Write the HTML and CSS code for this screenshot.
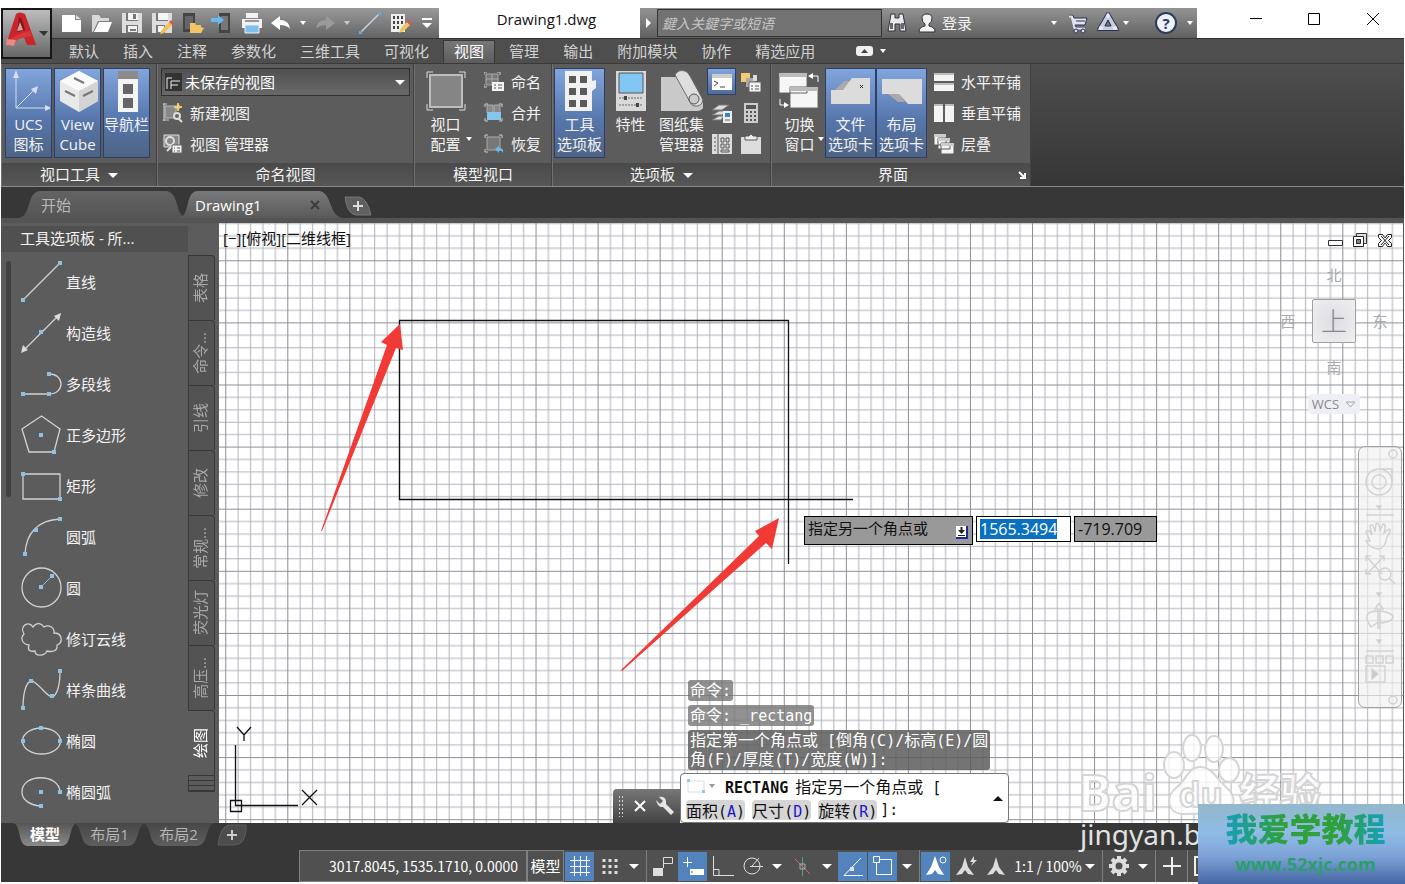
FILE: index.html
```
<!DOCTYPE html>
<html lang="zh-CN">
<head>
  <meta charset="UTF-8">
  <title>Drawing1.dwg</title>
  <link rel="stylesheet" href="styles.css">
</head>
<body>
  <header class="titlebar">
    <button class="app-button" aria-label="应用程序菜单">
      <svg width="46" height="46" viewBox="0 0 46 46">
        <path d="M3 34 L13 3 Q16 0 22 3 L33 34 L24 34 L21 26 L14 26 L11 35 Z" fill="#c9252b"/>
        <path d="M16 6 L19 8 L22 19 L14 21 Z" fill="#8b1218"/>
        <path d="M17 11 L20 19 L14 20 Z" fill="#c9a6a6"/>
        <path d="M4 31 Q14 22 27 20 L29 25 Q15 26 8 34 Z" fill="#d8363b"/>
        <path d="M4 28 L3 34 L11 35 L13 29 Z" fill="#e88a87"/>
        <path d="M36 20 h9 l-4 5 z" fill="#333"/>
      </svg>
    </button>
    <div class="quick-access">
      <button aria-label="新建"><svg width="24" height="24"><path d="M2 4h13v5h6v12H2z" fill="#fff"/><path d="M16 4l5 4h-5z" fill="#ddd"/></svg></button>
      <button aria-label="打开"><svg width="24" height="24"><path d="M2 4h7l2 3h8v3H8L3 21H2z" fill="#d8d8d8"/><path d="M9 11h13l-4 10H4z" fill="#fff"/></svg></button>
      <button aria-label="保存"><svg width="24" height="24"><path d="M2 2h20v20H2z" fill="#ddd"/><path d="M6 2h12v8H6zM6 14h12v8H6z" fill="#777"/><path d="M8 2h10v7H8zM8 15h9v6H8z" fill="#f4f4f4"/><path d="M13 3h3v5h-3zM10 18h6v2h-6z" fill="#777"/></svg></button>
      <button aria-label="另存为"><svg width="24" height="24"><path d="M2 2h20v20H2z" fill="#ddd"/><path d="M6 2h12v8H6zM6 14h9v8H6z" fill="#777"/><path d="M8 2h10v7H8zM8 15h6v6H8z" fill="#f4f4f4"/><path d="M11 20l8-9 3 3-8 8-4 1z" fill="#f0c25b"/><path d="M19 11l2-2 3 3-2 2z" fill="#e0524b"/></svg></button>
      <button aria-label="从移动设备打开"><svg width="24" height="24"><path d="M3 2h12v19H3z" fill="#444"/><path d="M5 5h8v13H5z" fill="#666"/><path d="M10 12h5l1 2h5v2l3 1-3 5H10z" fill="#f2c566"/></svg></button>
      <button aria-label="保存到移动设备"><svg width="24" height="24"><path d="M9 2h11v20H9z" fill="#444"/><path d="M11 5h7v14h-7z" fill="#777"/><path d="M1 7h7V4l6 5-6 5v-3H1z" fill="#68b9ee"/></svg></button>
      <button aria-label="打印"><svg width="24" height="24"><path d="M6 2h12v5H6zM2 8h20v9H2z" fill="#f2f2f2"/><path d="M5 9h14v2H5z" fill="#999"/><path d="M5 14h14v8H5z" fill="#7cc0ee" stroke="#eee"/></svg></button>
      <button class="wide" aria-label="放弃"><svg width="24" height="24"><path d="M2 12l9-7v4q9 0 10 9-3-4-10-4v5z" fill="#fff"/></svg></button>
      <i class="caret small"></i>
      <button class="wide" aria-label="重做"><svg width="24" height="24"><path d="M22 12l-9-7v4q-9 0-10 9 3-4 10-4v5z" fill="#9a9a9a"/></svg></button>
      <i class="caret small dim"></i>
      <button aria-label="直线"><svg width="24" height="24"><path d="M3 21L21 3" stroke="#c8d6e0" stroke-width="1.5"/><path d="M1 20h3v3H1zM20 1h3v3h-3z" fill="#68a8dc"/></svg></button>
      <button aria-label="工具选项板"><svg width="24" height="24"><path d="M3 3h14v18H3z" fill="#eee"/><path d="M5 5h2v3H5zM9 5h2v3H9zM13 5h2v3h-2zM5 10h2v3H5zM9 10h2v3H9zM13 10h2v3h-2zM5 15h2v3H5zM9 15h2v3H9z" fill="#444"/><path d="M11 22l2-5 6-6 3 3-6 6z" fill="#f0c25b"/><path d="M19 11l2-2 3 3-2 2z" fill="#e0524b"/></svg></button>
      <button aria-label="自定义"><svg width="12" height="14"><path d="M1 2h10v2H1zM1 7h10l-5 5z" fill="#fff"/></svg></button>
    </div>
    <h1 class="file-title">Drawing1.dwg</h1>
    <div class="info-center">
      <i class="play"></i>
      <input type="text" class="search" placeholder="鍵入关鍵字或短语" aria-label="搜索">
      <button aria-label="搜索"><svg width="20" height="22"><path d="M4 2h4v4h4V2h4l3 17h-6v-7H8v7H1z" fill="#e8e8ee" stroke="#333"/><path d="M3 11h3v6H3zM14 11h3v6h-3z" fill="#667"/></svg></button>
      <button aria-label="用户"><svg width="20" height="22"><path d="M2 20q0-5 6-6v-2q-3-2-3-6 0-4 5-4t5 4q0 4-3 6v2q6 1 6 6z" fill="#f1f1f4" stroke="#333"/></svg></button>
      <a href="#" class="login">登录</a>
      <i class="caret small"></i>
      <button class="cart" aria-label="购物车"><svg width="20" height="22"><path d="M5 6h14l-2 7H7z" fill="#dfe3f0"/><path d="M1 4h3l3 12h10" fill="none" stroke="#dfe3f0" stroke-width="3"/><path d="M1 3h4l1 3h13l-2 7H7l1 2h9M8 9h9" fill="none" stroke="#283252"/><circle cx="8" cy="19" r="2" fill="#dde" stroke="#283252"/><circle cx="15" cy="19" r="2" fill="#dde" stroke="#283252"/></svg></button>
      <button class="share" aria-label="应用"><svg width="22" height="22"><path d="M11 4L4 16h14z" fill="none" stroke="#283252" stroke-width="6"/><path d="M11 4L4 16h14z" fill="none" stroke="#c8cee2" stroke-width="4"/><path d="M11 8l-3 6h6z" fill="#777" stroke="#283252"/><g fill="#e8ebf5"><circle cx="11" cy="4" r="2"/><circle cx="4" cy="16" r="2"/><circle cx="18" cy="16" r="2"/></g></svg></button>
      <i class="caret small"></i>
      <button class="help" aria-label="帮助"><b>?</b></button>
      <i class="caret small"></i>
    </div>
    <div class="window-buttons">
      <button aria-label="最小化"><svg width="14" height="14"><path d="M1 6.500h12" stroke="#000"/></svg></button>
      <button aria-label="最大化"><svg width="14" height="14"><path d="M1.500 1.500h11v11h-11z" fill="none" stroke="#000"/></svg></button>
      <button aria-label="关闭"><svg width="14" height="14"><path d="M1 1l12 12M13 1L1 13" stroke="#000"/></svg></button>
    </div>
  </header>

  <nav class="menu">
    <a href="#">默认</a>
    <a href="#">插入</a>
    <a href="#">注释</a>
    <a href="#">参数化</a>
    <a href="#">三维工具</a>
    <a href="#">可视化</a>
    <a href="#" class="active">视图</a>
    <a href="#">管理</a>
    <a href="#">输出</a>
    <a href="#">附加模块</a>
    <a href="#">协作</a>
    <a href="#">精选应用</a>
    <button class="collapse" aria-label="最小化功能区"><svg width="17" height="10"><rect width="17" height="10" rx="3" fill="#f0f0f0"/><path d="M5 7h7L8.500 3z" fill="#444"/></svg></button>
    <i class="caret small"></i>
  </nav>

  <section class="ribbon">
    <div class="panel panel-tools">
      <div class="panel-body">
        <button class="big on">
          <svg width="44" height="44"><path d="M8 39V5M8 39h32M8 39l20-20" stroke="#d5deed" fill="none"/><path d="M8 1l3 8H5zM44 39l-7 3v-6zM30 17l-2 8-5-5z" fill="#d5deed"/></svg>
          <span>UCS<br>图标</span>
        </button>
        <button class="big on">
          <svg width="44" height="44"><path d="M22 2l19 10v20L22 43 3 32V12z" fill="#e9e9e9"/><path d="M22 2l19 10-19 10L3 12z" fill="#fafafa"/><path d="M22 22l19-10v20L22 43z" fill="#d4d4d4"/><path d="M17 9l10 5M8 22l10 5M26 27l10-5" stroke="#777" stroke-width="2"/></svg>
          <span>View<br>Cube</span>
        </button>
        <button class="big on">
          <svg width="44" height="44"><path d="M12 2h20v8H12z" fill="#8b8b8b"/><path d="M12 10h20v33H12z" fill="#f4f4f4"/><path d="M17 15h10v10H17zM17 29h10v10H17z" fill="#666"/></svg>
          <span>导航栏</span>
        </button>
      </div>
      <h2>视口工具 <i class="caret"></i></h2>
    </div>

    <div class="panel panel-views">
      <div class="panel-body rows">
        <div class="view-select">
          <svg width="17" height="18"><path d="M0 0h17v18H0z" fill="#333"/><path d="M2 16V5h5M6 16V8h9M6 12h7" fill="none" stroke="#eee"/></svg>
          <select aria-label="视图">
            <option>未保存的视图</option>
          </select>
          <i class="caret"></i>
        </div>
        <button class="row"><svg width="20" height="20"><path d="M2 3h11v12H2z" fill="#888" stroke="#bbb"/><path d="M0 1h4M1 0v18M0 17h6" stroke="#ccc"/><circle cx="14" cy="13" r="3" fill="#666" stroke="#ddd" stroke-width="2"/><path d="M16 16l3 3" stroke="#ddd" stroke-width="2"/><path d="M15 0l1 3 3 1-3 1-1 3-1-3-3-1 3-1z" fill="#f5cf7a" stroke="#f5cf7a"/></svg>新建视图</button>
        <button class="row"><svg width="20" height="20"><path d="M1 1h15v12H1z" fill="#888" stroke="#ddd"/><circle cx="7" cy="7" r="4" fill="none" stroke="#ddd" stroke-width="2"/><path d="M4 17l6-6" stroke="#ddd" stroke-width="2"/><path d="M9 11h10v8H9z" fill="#f4f4f4" stroke="#666"/><path d="M11 14h1M14 14h3M11 17h1M14 17h3" stroke="#555"/></svg>视图 管理器</button>
      </div>
      <h2>命名视图</h2>
    </div>

    <div class="panel panel-viewports">
      <div class="panel-body">
        <button class="big menu-btn">
          <svg width="44" height="44"><path d="M6 6h32v32H6z" fill="#858585" stroke="#bdbdbd" stroke-width="2"/><path d="M3 9V3h6M35 3h6v6M41 35v6h-6M9 41H3v-6" fill="none" stroke="#ddd"/></svg>
          <span>视口<br>配置</span>
          <i class="caret small"></i>
        </button>
        <div class="rows">
          <button class="row"><svg width="20" height="20"><path d="M2 2h12v11H2zM8 2v11M2 7h12" fill="#777" stroke="#aaa"/><path d="M0 3V0h3M13 0h3v3M0 12v3h3" fill="none" stroke="#ccc"/><path d="M8 10h12v9H8z" fill="#f4f4f4"/><path d="M10 13h2M14 13h4M10 16h2M14 16h4" stroke="#555"/></svg>命名</button>
          <button class="row"><svg width="20" height="20"><path d="M3 2h6v8H3zM10 2h6v8h-6z" fill="#888" stroke="#aaa"/><path d="M3 9h14v8H3z" fill="#86c5ee"/><path d="M1 4V1h3M15 1h3v3M18 15v3h-3M4 18H1v-3" fill="none" stroke="#ccc"/></svg>合并</button>
          <button class="row"><svg width="20" height="20"><path d="M3 3h13v13H3z" fill="#777" stroke="#aaa"/><path d="M1 4V1h3M15 1h3v3M4 18H1v-3" fill="none" stroke="#ccc"/><path d="M11 15l4-3v2q5 0 4 5-1-3-4-2v2z" fill="#6fb9ea"/></svg>恢复</button>
        </div>
      </div>
      <h2>模型视口</h2>
    </div>

    <div class="panel panel-palettes">
      <div class="panel-body">
        <button class="big on">
          <svg width="44" height="44"><path d="M7 2h27v10l4-1v8l-4 3v20H7z" fill="#f1f1f1"/><path d="M11 7h7v7h-7zM22 7h7v7h-7zM11 19h7v7h-7zM22 19h7v7h-7zM11 31h7v7h-7zM22 31h7v7h-7z" fill="#5a5a5a"/></svg>
          <span>工具<br>选项板</span>
        </button>
        <button class="big">
          <svg width="44" height="44"><path d="M7 2h30v40H7z" fill="#d9d9d9"/><path d="M10 4h24v20H10z" fill="#82c7f4" stroke="#555"/><path d="M10 29h24M10 36h24" stroke="#666" stroke-dasharray="2 1"/><path d="M15 27h3v4h-3zM27 34h3v4h-3z" fill="#444"/></svg>
          <span>特性</span>
        </button>
        <button class="big">
          <svg width="44" height="44"><path d="M1 8h16l14 22h12v9q-2 3-6 3H1z" fill="#c9c9c9"/><path d="M15 6q3-6 10-4 3 1 5 5l12 22q2 6-4 8-6 1-8-4z" fill="#dedede" stroke="#6a6a6a"/><circle cx="34" cy="30" r="5" fill="#ccc" stroke="#555"/></svg>
          <span>图纸集<br>管理器</span>
        </button>
        <div class="icon-grid">
          <button class="on" aria-label="命令行"><svg width="20" height="18"><path d="M0 1h20v16H0z" fill="#fff"/><path d="M0 1h20v4H0z" fill="#ccc"/><path d="M2 8l4 2-4 3M8 14h5" fill="none" stroke="#444"/></svg></button>
          <button aria-label="标记集"><svg width="20" height="20"><path d="M0 1h9v9H0z" fill="#f4cb74"/><path d="M5 6h9v9H5z" fill="#aaa"/><path d="M12 3h4v6h-4z" fill="#ddd"/><path d="M8 10h12v10H8z" fill="#f4f4f4" stroke="#666"/><path d="M10 14h2M14 14h4M10 17h2M14 17h4" stroke="#555"/></svg></button>
          <button aria-label="图层特性"><svg width="20" height="20"><path d="M0 7l7-5h10l-7 5zM0 12l7-4h10l-7 4zM0 17l7-4h5l-3 4z" fill="#ddd" stroke="#777"/><path d="M11 8h9v12h-9z" fill="#eee"/><path d="M13 10h5v4h-5z" fill="#3487c5"/><path d="M13 17h5" stroke="#666"/></svg></button>
          <button aria-label="快速计算器"><svg width="16" height="20"><path d="M1 0h14v20H1z" fill="#ccc"/><path d="M3 2h10v4H3zM3 8h2v2H3zM7 8h2v2H7zM11 8h2v2h-2zM3 12h2v2H3zM7 12h2v2H7zM11 12h2v2h-2zM3 16h2v2H3zM7 16h2v2H7zM11 16h2v2h-2z" fill="#555"/></svg></button>
          <button aria-label="设计中心"><svg width="20" height="20"><path d="M0 0h20v20H0z" fill="#ddd"/><path d="M6 0v20" stroke="#555"/><path d="M2 4h2M2 8h2M2 12h2M2 16h2" stroke="#555"/><path d="M9 4h3v4H9zM14 4h3v4h-3zM9 10h3v4H9zM14 10h3v4h-3zM9 16h8v2H9z" fill="none" stroke="#555"/></svg></button>
          <button aria-label="剪贴板"><svg width="22" height="20"><path d="M1 3h20v17H1z" fill="#ddd"/><path d="M5 2h4q2-4 4 0h4v4H5z" fill="#eee" stroke="#555"/></svg></button>
        </div>
      </div>
      <h2>选项板 <i class="caret"></i></h2>
    </div>

    <div class="panel panel-ui">
      <div class="panel-body">
        <button class="big menu-btn">
          <svg width="44" height="44"><path d="M1 4h28v20H1zM12 18h28v21H12z" fill="#f6f6f6" stroke="#666"/><path d="M1 4h28v4H1zM12 18h28v4H12z" fill="#bbb"/><path d="M40 13V7h-8M2 30v6h7" fill="none" stroke="#fff"/><path d="M30 7l5-3v6zM11 36l-5-3v6z" fill="#fff"/></svg>
          <span>切换<br>窗口</span>
          <i class="caret small"></i>
        </button>
        <button class="big on">
          <svg width="44" height="44"><path d="M6 21l9-9h8l-9 9z" fill="#aaa"/><path d="M2 21h12l9-12h18v26H2z" fill="#dcdcdc"/><path d="M31 16l3 3M34 16l-3 3" stroke="#333"/></svg>
          <span>文件<br>选项卡</span>
        </button>
        <button class="big on">
          <svg width="44" height="44"><path d="M8 25l10 8h7l-6-8z" fill="#aaa"/><path d="M2 10h40v25H28l-9-10H2z" fill="#dcdcdc"/></svg>
          <span>布局<br>选项卡</span>
        </button>
        <div class="rows">
          <button class="row"><svg width="20" height="20"><path d="M0 1h20v8H0zM0 11h20v8H0z" fill="#f4f4f4"/><path d="M0 1h20v2H0zM0 11h20v2H0z" fill="#bbb"/></svg>水平平铺</button>
          <button class="row"><svg width="20" height="20"><path d="M0 1h9v18H0zM11 1h9v18h-9z" fill="#f4f4f4"/><path d="M0 1h9v2H0zM11 1h9v2h-9z" fill="#bbb"/></svg>垂直平铺</button>
          <button class="row"><svg width="20" height="20"><path d="M0 0h12v11H0zM4 4h12v11H4zM7 9h13v11H7z" fill="#f4f4f4" stroke="#5c5c5c"/><path d="M0 0h12v3H0zM4 4h12v3H4zM7 9h13v3H7z" fill="#ccc"/></svg>层叠</button>
        </div>
      </div>
      <h2>界面<svg class="launcher" width="8" height="8"><path d="M1 1l5 5M7 2v5H2" fill="none" stroke="#fff" stroke-width="2"/></svg></h2>
    </div>
  </section>

  <div class="doc-tabs">
    <a href="#" class="doc-tab">开始</a>
    <a href="#" class="doc-tab active">Drawing1<svg width="10" height="10"><path d="M1 1l8 8M9 1L1 9" stroke="#3c3c3c" stroke-width="2"/></svg></a>
    <button class="add" aria-label="新图形"><svg width="28" height="20"><path d="M1 1h14q8 1 12 18H12Q3 18 1 1z" fill="#606060" stroke="#777"/><path d="M14 5v10M9 10h10" stroke="#ddd" stroke-width="2"/></svg></button>
  </div>

  <main>
    <aside class="palette">
      <div class="palette-main">
        <h2>工具选项板 - 所...</h2>
        <div class="palette-scroll">
          <i class="scrollbar"></i>
          <ul class="tools">
            <li><svg width="44" height="44"><path class="ln" d="M3 40L40 3"/><path class="pt" d="M1 38h4v4H1zM38 1h4v4h-4z"/></svg>直线</li>
            <li><svg width="44" height="44"><path class="ln" d="M3 40L40 3"/><path d="M1 42l2-8 5 5zM41 2l-2 8-5-5z" fill="#ddd"/><path class="pt" d="M19 19h4v4h-4z"/></svg>构造线</li>
            <li><svg width="44" height="44"><path class="ln" d="M3 32h26c16 0 16-20 0-20"/><path class="pt" d="M1 30h4v4H1zM27 30h4v4h-4zM27 10h4v4h-4z"/></svg>多段线</li>
            <li><svg width="44" height="44"><path class="ln" d="M21.500 3L40 16l-6 23H9L2 16z"/><path class="pt" d="M19 20h4v4h-4zM32 37h4v4h-4z"/></svg>正多边形</li>
            <li><svg width="44" height="44"><path class="ln" d="M3 10h37v25H3z"/><path class="pt" d="M1 8h4v4H1zM38 33h4v4h-4z"/></svg>矩形</li>
            <li><svg width="44" height="44"><path class="ln" d="M5 39C6 18 18 5 40 4"/><path class="pt" d="M3 37h4v4H3zM14 13h4v4h-4zM38 2h4v4h-4z"/></svg>圆弧</li>
            <li><svg width="44" height="44"><circle class="ln" cx="21.500" cy="21.500" r="19.500"/><path d="M21 21L32 10" stroke="#86bde3"/><path class="pt" d="M19 19h4v4h-4zM30 8h4v4h-4z"/></svg>圆</li>
            <li><svg width="44" height="44"><path class="ln" d="M4 17c-5-8 5-14 9-7 4-6 9-3 11 0 5-3 11 1 10 6 9 0 9 10 3 12 1 7-6 7-10 6-3 6-12 5-12 0-5 1-8-1-6-6-7-1-9-7-5-11z"/></svg>修订云线</li>
            <li><svg width="44" height="44"><path class="ln" d="M3 39C3 22 8 9 14 14c9 6 14 16 19 15 5-4 7-14 7-26"/><path class="pt" d="M1 38h4v4H1zM9 11h4v4H9zM30 26h4v4h-4zM38 1h4v4h-4z"/></svg>样条曲线</li>
            <li><svg width="44" height="44"><ellipse class="ln" cx="21.500" cy="22" rx="19" ry="13"/><path class="pt" d="M1 20h4v4H1zM38 20h4v4h-4zM19 7h4v4h-4z"/></svg>椭圆</li>
            <li><svg width="44" height="44"><path class="ln" d="M40 22C39 3 2 3 2 22c0 8 8 13 18 14"/><path class="pt" d="M38 20h4v4h-4zM19 20h4v4h-4zM19 34h4v4h-4z"/></svg>椭圆弧</li>
          </ul>
        </div>
      </div>
      <nav class="side-tabs">
        <a href="#"><span>表格</span></a>
        <a href="#"><span>命令...</span></a>
        <a href="#"><span>引线</span></a>
        <a href="#"><span>修改</span></a>
        <a href="#"><span>常规...</span></a>
        <a href="#"><span>荧光灯</span></a>
        <a href="#"><span>高压...</span></a>
        <a href="#" class="active"><span>绘图</span></a>
        <i class="stack"></i>
      </nav>
    </aside>

    <section class="canvas">
      <svg class="drawing">
        <defs>
          <pattern id="grid" x="68.300" y="37.300" width="62.060" height="62.100" patternUnits="userSpaceOnUse">
            <path d="M12.900 0V62.100M25.300 0V62.100M37.700 0V62.100M50.100 0V62.100M0 12.900H62.100M0 25.300H62.100M0 37.700H62.100M0 50.100H62.100" stroke="#b0b2ba"/>
            <path d="M.5 0V62.100M0 .5H62.100" stroke="#8c8e94"/>
          </pattern>
        </defs>
        <rect width="100%" height="100%" fill="url(#grid)"/>
        <!-- rectangle being drawn and the crosshair at its open corner -->
        <path d="M180.500 97.500h389v179h-389zM505 276.500h129M569.500 97v244" fill="none" stroke="#111" stroke-width="1.300"/>
        <path d="M102 308L168 122 162 119 181 101 184 127 177 125 103 308z" fill="#f13a36"/>
        <path d="M402 447L540 313 536 308 560 295 553 326 547 320 403 448z" fill="#f13a36"/>
        <!-- UCS icon -->
        <path d="M16.500 522v60.500H79M11.500 577.500h11v11h-11zM18 504l7 8 7-8M25 512v6M83 567l15 15M98 567l-15 15" fill="none" stroke="#111" stroke-width="1.300"/>
      </svg>

      <div class="view-label">[−][俯视][二维线框]</div>

      <div class="doc-window-buttons">
        <button aria-label="最小化"><svg width="16" height="16"><path d="M1.500 8.500h14v5h-14z" fill="#fff" stroke="#333"/></svg></button>
        <button aria-label="还原"><svg width="16" height="16"><path d="M4.500 1.500h10v10h-10z" fill="#ddd" stroke="#333"/><path d="M1.500 4.500h10v10h-10z" fill="#fff" stroke="#222"/><path d="M4.500 7.500h4v4h-4z" fill="#888" stroke="#222"/></svg></button>
        <button aria-label="关闭"><svg width="16" height="16"><path d="M1.500 2.500h4l2 3h1l2-3h4v3l-3 3 3 3v3h-4l-2-3h-1l-2 3h-4v-3l3-3-3-3z" fill="#fff" stroke="#222"/><path d="M4 4l8 9M12 4l-8 9" stroke="#222"/></svg></button>
      </div>

      <div class="compass">
        <span class="north">北</span>
        <span class="west">西</span>
        <button class="top-face">上</button>
        <span class="east">东</span>
        <span class="south">南</span>
        <button class="wcs">WCS <svg width="11" height="7"><path d="M1 1h9L5.500 6z" fill="none" stroke="#aaa"/></svg></button>
      </div>

      <div class="nav-bar">
        <svg width="42" height="260" fill="none" stroke="#d2d2d2" stroke-width="1.500">
          <circle cx="34" cy="7" r="4"/><circle cx="34" cy="253" r="4"/>
          <circle cx="20" cy="35" r="13"/><circle cx="20" cy="35" r="7"/><path d="M20 22h13v13M7 68h28M7 204h28"/>
          <path d="M11 94l-4-9q2-4 6 3l-2-9q3-4 5 6l1-8q3-3 4 7l3-7q4 0 1 9l5-4q3 1-2 8-2 12-9 12-8-1-12-8zM7 109l16 18M25 109L8 127M7 114v-5h5M20 109h5v5M7 122v5h5"/>
          <circle cx="26" cy="127" r="6"/><path d="M30 131l6 6M20 156l-4 6h3v20M20 156l4 6h-3v20M8 169q0-5 13-5 14 2 13 7-3 5-16 5l-6 4-4-7z"/>
          <path d="M7 209h7v7H7zM17 209h7v7h-7zM27 209h7v7h-7zM7 219h19v16H7z"/><path d="M13 222l6 5-6 5zM18 59h4l-2 3zM18 146h4l-2 3zM18 193h4l-2 3z" fill="#c8c8c8"/>
        </svg>
      </div>

      <div class="dyn-prompt">
        <label for="dyn-x">指定另一个角点或<svg width="14" height="14"><path d="M1 1h11v12H1z" fill="#fff"/><path d="M12 1v12H1" fill="none" stroke="#1d2a94" stroke-width="2"/><path d="M3 5h7L6.500 9zM5.500 2h2v4h-2zM3 10h7v1H3z" fill="#222"/></svg></label>
        <div class="dyn-field"><input id="dyn-x" type="text" value="1565.3494"></div>
        <input class="dyn-y" type="text" value="-719.709" aria-label="Y">
      </div>

      <div class="baidu">
        <svg width="270" height="122">
          <g fill="#fff" fill-opacity=".75" stroke="#d5d5d5" stroke-width="2">
            <ellipse cx="104" cy="31" rx="10" ry="13"/>
            <ellipse cx="122" cy="14" rx="9" ry="13"/>
            <ellipse cx="144" cy="15" rx="9" ry="13"/>
            <ellipse cx="159" cy="36" rx="10" ry="12"/>
            <path d="M130 33c-12 0-14 14-23 20-13 10-9 26 5 27 10 0 30-1 37 0 15-1 20-16 7-27-9-7-13-20-26-20z"/>
            <text class="baidu-latin" x="8" y="77">Bai</text>
            <text class="baidu-du" x="109" y="73">du</text>
            <text class="baidu-cjk" x="169" y="74">经验</text>
          </g>
          <text class="baidu-url" x="10" y="111">jingyan.b</text>
        </svg>
      </div>

      <div class="command">
        <div class="command-bar">
          <i class="grip"></i>
          <button aria-label="关闭"><svg width="12" height="12"><path d="M1 1l10 10M11 1L1 11" stroke="#fff" stroke-width="2"/></svg></button>
          <button aria-label="自定义"><svg width="20" height="20"><path d="M1 4l4 4 3-3-4-4q6-1 7 4v3l8 8-3 3-8-8Q3 12 1 4z" fill="#e6e6e6"/></svg></button>
        </div>
        <div class="command-body">
          <div class="history">
            <p>命令<code>:</code></p>
            <p>命令<code>: _rectang</code></p>
            <p>指定第一个角点或<code> [</code>倒角<code>(C)/</code>标高<code>(E)/</code>圆<br>角<code>(F)/</code>厚度<code>(T)/</code>宽度<code>(W)]:</code></p>
          </div>
          <div class="prompt">
            <div class="prompt-line"><svg width="20" height="16"><path d="M2 3h16v11H2z" fill="none" stroke="#ddd"/><path d="M1 1h3v3H1zM16 12h3v3h-3z" fill="#8fcbe8"/></svg><i class="caret small grey"></i><span><code><b>RECTANG</b></code></span><span>指定另一个角点或<code> [</code></span></div>
            <div class="prompt-line options"><button>面积<code>(<b>A</b>)</code></button><button>尺寸<code>(<b>D</b>)</code></button><button>旋转<code>(<b>R</b>)</code></button><code>]:</code></div>
            <i class="up"></i>
          </div>
        </div>
      </div>
    </section>
  </main>

  <nav class="layout-tabs">
    <a href="#" class="active">模型</a>
    <a href="#">布局1</a>
    <a href="#">布局2</a>
    <button class="add" aria-label="新建布局"><svg width="30" height="22"><path d="M29 1v5q-1 15-12 15H1Q3 3 12 1z" fill="#4c4c4c" stroke="#5e5e5e"/><path d="M15 6v10M10 11h10" stroke="#ccc" stroke-width="2"/></svg></button>
  </nav>

  <footer class="status">
    <output class="coords">3017.8045, 1535.1710, 0.0000</output>
    <button class="model">模型</button>
    <button class="on" aria-label="栅格"><svg width="22" height="22"><path d="M5.500 1v20M11.500 1v20M17.500 1v20M1 5.500h20M1 11.500h20M1 17.500h20" stroke="#fff"/></svg></button>
    <button aria-label="捕捉"><svg width="22" height="22"><path d="M5 4v16M11 4v16M17 4v16" stroke="#ddd" stroke-width="3" stroke-dasharray="3"/></svg></button>
    <i class="caret"></i>
    <hr>
    <button aria-label="推断约束"><svg width="22" height="22"><path d="M1 13h10v8H1z" fill="#ddd"/><path d="M11.500 13V2.500h9v6h-9" fill="none" stroke="#ddd"/></svg></button>
    <button class="on" aria-label="动态输入"><svg width="22" height="22"><path d="M5.500 2v10M1 7.500h9" stroke="#fff"/><path d="M8 14h14v6H8z" fill="#fff"/><path d="M10 16v2" stroke="#555"/></svg></button>
    <button aria-label="正交"><svg width="22" height="22"><path d="M1.500 1v19.500H22M2 14.500h5v6" fill="none" stroke="#ddd"/></svg></button>
    <button aria-label="极轴"><svg width="22" height="22"><circle cx="10" cy="11" r="8" fill="none" stroke="#ddd"/><path d="M10 11l7-8M8 11.500h13" stroke="#ddd"/></svg></button>
    <i class="caret"></i>
    <button aria-label="等轴测"><svg width="22" height="22"><path d="M10.500 2v19" stroke="#62a06a"/><path d="M3 4l15 15" stroke="#c56b6b"/><path d="M8 9h5v5H8z" fill="none" stroke="#aaa"/></svg></button>
    <i class="caret"></i>
    <button class="on" aria-label="对象捕捉追踪"><svg width="22" height="22"><path d="M19 3L2 20.500h19" fill="none" stroke="#fff"/><path d="M8 12h4v4H8z" fill="#ddd"/></svg></button>
    <button class="on" aria-label="对象捕捉"><svg width="22" height="22"><path d="M4.500 4.500h15v15h-15z" fill="none" stroke="#fff"/><path d="M1.500 1.500h6v6h-6z" fill="#5283bd" stroke="#fff"/></svg></button>
    <i class="caret"></i>
    <hr>
    <button class="on" aria-label="注释可见性"><svg width="22" height="22"><path d="M10 1l4 11 5 8-6-1-3-4-3 4-6 1 5-8z" fill="#fff"/><circle cx="18" cy="5" r="3" fill="none" stroke="#fff"/></svg></button>
    <button aria-label="自动缩放"><svg width="22" height="22"><path d="M10 2l3 10 6 8-6-1-3-4-3 4-6 1 6-8zM19 1l-4 6h3l-2 4 6-6h-3z" fill="#ddd"/></svg></button>
    <button aria-label="注释比例"><svg width="22" height="22"><path d="M11 2l3 10 6 8-6-1-3-4-3 4-6 1 6-8z" fill="#ddd"/></svg></button>
    <button class="scale">1:1 / 100%</button>
    <i class="caret"></i>
    <hr>
    <button aria-label="工作空间"><svg width="22" height="22"><circle cx="11" cy="11" r="5.500" fill="none" stroke="#ddd" stroke-width="4"/><path d="M11 1v4M11 17v4M1 11h4M17 11h4M4 4l3 3M15 15l3 3M18 4l-3 3M7 15l-3 3" stroke="#ddd" stroke-width="4"/></svg></button>
    <i class="caret"></i>
    <hr>
    <button aria-label="注释监视器"><svg width="22" height="22"><path d="M11 2v18M2 11h18" stroke="#eee" stroke-width="2"/></svg></button>
    <hr>
    <button aria-label="自定义"><svg width="22" height="22"><path d="M2 2h18v18H2zM5 7h12M5 11h12M5 15h12" fill="none" stroke="#eee" stroke-width="2"/></svg></button>
  </footer>

  <div class="site-badge">
    <strong>我爱学教程</strong>
    <span>www.52xjc.com</span>
  </div>
</body>
</html>
```

FILE: styles.css
```
* { box-sizing: border-box; }
body {
  margin: 0;
  padding: 8px 1px 2px;
  min-height: 100vh;
  display: flex;
  flex-direction: column;
  position: relative;
  background: #fff;
  color: #f2f2f2;
  font: 15px/20px "Open Sans", "Noto Sans CJK SC", sans-serif;
  overflow-x: hidden;
}
button { border: 0; padding: 0; background: none; color: inherit; font: inherit; }
a { color: inherit; text-decoration: none; }
h1, h2, p, ul { margin: 0; padding: 0; font-weight: normal; list-style: none; }
svg { display: block; flex: none; }
hr { margin: 0; border: 0; }

.caret { flex: none; border: 5px solid transparent; border-top-color: #fff; border-bottom: 0; display: inline-block; }
.caret.small { border-width: 4px 3px 0; }
.caret.dim { opacity: 0.6; }
.caret.grey { border-top-color: #999; }

/* title bar */
.titlebar { display: flex; height: 30px; position: relative; }
.app-button {
  position: absolute;
  z-index: 2;
  width: 51px;
  height: 51px;
  border: 2px solid #161616;
  background: linear-gradient(#bdbdbd, #676767);
}
.quick-access {
  width: 438px;
  padding-left: 56px;
  display: flex;
  align-items: center;
  background: linear-gradient(#999, #646464);
}
.quick-access button { width: 30px; display: flex; justify-content: center; }
.quick-access button.wide { width: 28px; }
.quick-access .caret { margin: 0 5px; }
.quick-access button:last-child { width: 20px; margin-left: 2px; }
.file-title { width: 201px; padding-left: 14px; text-align: center; color: #111; font-size: 15px; line-height: 22px; }
.info-center { width: 557px; display: flex; align-items: center; background: linear-gradient(#949494, #606060); }
.play { margin: 0 6px; border: 5px solid transparent; border-left-color: #fff; border-right: 0; }
.search {
  width: 225px;
  height: 28px;
  padding: 0 4px;
  border: 1px solid #333;
  background: #727272;
  color: #fff;
  font: italic 14px "Open Sans", "Noto Sans CJK SC", sans-serif;
}
.search::placeholder { color: #c5c5c5; }
.info-center button { width: 30px; display: flex; justify-content: center; }
.login { flex: 1; }
.info-center .cart { margin-left: 6px; }
.info-center .help {
  width: 22px;
  height: 22px;
  margin: 0 10px 0 26px;
  border: 2px solid #2c3c5d;
  border-radius: 11px;
  background: #eef1f6;
  color: #23406e;
  line-height: 18px;
}
.info-center > .caret:last-child { margin-right: 4px; }
.window-buttons { flex: 1; display: flex; justify-content: space-around; align-items: center; padding: 0 2px 8px 30px; }

/* ribbon */
.menu {
  display: flex;
  height: 25px;
  padding-left: 56px;
  align-items: stretch;
  background: #4e4e4e;
  border-top: 1px solid #333;
  color: #d2d2d2;
}
.menu a { padding: 2px 12px 0; }
.menu a.active { padding: 0 10px; margin: 1px 2px 0; border: 1px solid #383838; border-bottom: 0; background: linear-gradient(#777, #5c5c5c); color: #fff; }
.menu .collapse { margin: 0 7px 0 29px; }
.menu > .caret { align-self: center; }
.ribbon {
  display: flex;
  height: 124px;
  border-top: 1px solid #3a3a3a;
  border-bottom: 1px solid #8a8a8a;
  background: linear-gradient(#4e4e4e, #363636);
}
.panel { display: flex; flex-direction: column; background: #5c5c5c; border-right: 1px solid #414141; border-left: 1px solid #707070; }
.panel-body { flex: 1; display: flex; padding: 4px 3px 5px; }
.panel h2 { height: 23px; line-height: 22px; font-size: 15px; text-align: center; background: linear-gradient(#4a4a4a, #565656); position: relative; }
.panel h2 .caret { margin: 0 0 2px 4px; }
.panel-tools { width: 156px; }
.panel-tools .panel-body { gap: 2px; }
.panel-views { width: 257px; }
.panel-viewports { width: 138px; }
.panel-palettes { width: 219px; }
.panel-palettes .panel-body { padding-left: 1px; }
.panel-ui { width: 260px; }
.panel-ui h2 { padding-right: 16px; }
.panel-ui .panel-body { padding-left: 2px; }
.panel-ui .rows { margin-left: 7px; }
.big { flex: 1; display: flex; flex-direction: column; align-items: center; position: relative; white-space: nowrap; border: 1px solid transparent; line-height: 20px; }
.big svg { margin-bottom: 1px; }
.on { border: 1px solid #2b3f68; background: linear-gradient(#81a5dc, #4f6a96); }
.big.on { background: linear-gradient(#81a5dc, #5575aa 60%, #4f6484); }
.menu-btn .caret { position: absolute; right: 0; bottom: 16px; }
.panel-palettes .big, .panel-ui .big { flex: none; width: 51px; }
.panel-tools .big { flex: none; width: 47px; }
.panel-tools .big svg { width: 42px; }
.panel-viewports .big { flex: none; width: 55px; }
.rows { display: flex; flex-direction: column; gap: 3px; }
.row { height: 28px; display: flex; align-items: center; gap: 7px; white-space: nowrap; }
.panel-views .row { padding-left: 2px; }
.panel-viewports .rows { margin-left: 11px; }
.view-select { height: 28px; display: flex; align-items: center; padding: 0 4px 0 3px; border: 1px solid #303030; background: linear-gradient(#505050, #696969); }
.view-select select { flex: 1; appearance: none; border: 0; padding: 0 3px; background: none; color: #fff; font: inherit; }
.icon-grid { display: grid; grid-template-columns: 29px 22px; grid-auto-rows: 27px; gap: 4px 4px; }
.icon-grid button { display: flex; align-items: center; justify-content: center; }
.launcher { position: absolute; right: 4px; bottom: 7px; }

/* drawing file tabs */
.doc-tabs { display: flex; align-items: flex-start; height: 36px; padding: 4px 0 0 16px; background: #373737; border-bottom: 5px solid #545454; }
.doc-tab {
  width: 172px;
  height: 27px;
  padding: 4px 24px 0;
  display: flex;
  justify-content: space-between;
  background: linear-gradient(#636363, #555);
  color: #b8b8b8;
  clip-path: path("M0 27C16 27 8 0 24 0H148C164 0 156 27 172 27Z");
}
.doc-tab.active { width: 166px; margin-left: -11px; padding-left: 17px; background: linear-gradient(#797979, #5a5a5a); color: #fff; clip-path: path("M0 27C13 27 6 0 20 0H140C155 0 150 27 166 27Z"); }
.doc-tab.active svg { margin-top: 5px; }
.doc-tabs .add { margin: 5px 0 0; }

main { flex: 1; display: flex; background: #5c5c5c; border-right: 1px solid #555; }

/* tool palette */
.palette { width: 218px; display: flex; background: #5c5c5c; }
.palette-main { width: 187px; }
.palette h2 { height: 26px; margin-top: 3px; padding-left: 19px; line-height: 25px; font-size: 15px; background: #505050; }
.palette-scroll { display: flex; padding-top: 4px; }
.scrollbar { width: 5px; height: 236px; margin: 5px 9px 0 5px; border-radius: 3px; background: #414141; }
.tools li { height: 51px; display: flex; align-items: center; gap: 2px; }
.ln { fill: none; stroke: #d2d2d2; stroke-width: 1.3; }
.pt { fill: #8fc1e6; }
.side-tabs { width: 27px; padding-top: 32px; color: #a8a8a8; }
.side-tabs a { height: 65px; padding-right: 3px; display: flex; align-items: center; justify-content: center; border: 1px solid #373737; border-bottom-width: 0; border-top-right-radius: 4px; background: #535353; }
.side-tabs a.active { border-left: 0; background: none; color: #fff; }
.side-tabs span { writing-mode: vertical-rl; text-orientation: sideways; transform: rotate(180deg); }
.stack { display: block; height: 17px; border: 1px solid #373737; background: repeating-linear-gradient(#5c5c5c 0 4px, #373737 4px 5px); }

/* model space */
.canvas { flex: 1; position: relative; z-index: 1; background: #fff; color: #111; }
.drawing { position: absolute; width: 100%; height: 100%; }
.view-label { position: absolute; left: 4px; top: 5px; }
.doc-window-buttons { position: absolute; top: 9px; right: 10px; display: flex; gap: 9px; }
.compass {
  position: absolute;
  top: 42px;
  right: 11px;
  display: grid;
  grid-template-columns: 24px 44px 24px;
  grid-template-rows: 20px 44px 20px 20px;
  gap: 14px 12px;
  place-items: center;
  color: #aaa;
}
.north, .south, .wcs { grid-column: 2; }
.west { grid-area: 2 / 1; }
.top-face { grid-area: 2 / 2; }
.east { grid-area: 2 / 3; }
.south { grid-row: 3; }
.wcs { grid-row: 4; }
.compass .top-face { width: 44px; height: 44px; border: 1px solid #a0a0a0; border-radius: 2px; background: radial-gradient(#dcdce4, #f0f0f0); color: #888; font-size: 26px; font-weight: 300; }
.wcs { display: flex; align-items: center; gap: 6px; padding: 0 4px; margin-top: 6px; border-radius: 4px; background: #eeeef6; color: #888; font-size: 13px; }
.nav-bar { position: absolute; top: 223px; right: 1px; border: 1px solid #a2a2a2; border-radius: 7px; background: rgba(240, 240, 240, 0.65); }

.dyn-prompt { position: absolute; left: 585px; top: 293px; display: flex; align-items: flex-start; gap: 3px; }
.dyn-prompt label { width: 169px; height: 29px; padding: 1px 3px; display: flex; justify-content: space-between; border: 1px solid #000; background: #999; }
.dyn-prompt label svg { margin-top: 7px; }
.dyn-field { width: 95px; height: 26px; padding: 2px 3px; border: 1px solid #000; background: #fff; }
.dyn-prompt input { font: 16px/20px "Open Sans", sans-serif; }
.dyn-field input { display: block; width: 77px; height: 20px; padding: 0; border: 0; background: #0a70c0; color: #fff; }
.dyn-prompt .dyn-y { width: 83px; height: 26px; padding: 0 3px; border: 1px solid #000; background: #999; color: #111; }

/* command line */
.command { position: absolute; left: 394px; bottom: 0; display: flex; align-items: flex-end; font: 16px/19px "Noto Sans CJK SC", sans-serif; }
code { font: 15px/0 "DejaVu Sans Mono", monospace; white-space: pre; }
.command-bar { width: 67px; height: 34px; padding: 0 5px; display: flex; align-items: center; justify-content: space-between; border-radius: 4px 0 0 0; background: linear-gradient(#777, #444); }
.grip { width: 6px; height: 22px; background: radial-gradient(#ccc 1px, transparent 1px) 0 0 / 3px 4px; }
.history { padding-left: 8px; display: flex; flex-direction: column; align-items: flex-start; gap: 4px; margin-bottom: 3px; color: #fff; }
.history p { padding: 0 2px 2px; border-radius: 3px; background: rgba(92, 92, 92, 0.85); white-space: nowrap; }
.history p:first-child, .history p:nth-child(2) { background: rgba(118, 118, 118, 0.8); }
.prompt { width: 329px; height: 50px; padding: 2px 5px; border: 1px solid #777; border-radius: 4px; background: #fff; position: relative; }
.prompt-line { display: flex; align-items: center; height: 20px; }
.prompt-line .caret { margin: 0 10px 0 3px; }
.prompt-line span + span { margin-left: 7px; }
.prompt-line.options { margin-top: 4px; gap: 7px; }
.prompt-line.options > code { margin-left: -4px; line-height: 20px; }
.options button { border-radius: 4px; background: #d5d5d5; line-height: 20px; white-space: nowrap; }
.options button b { font-weight: normal; color: #1b16cc; }
.up { position: absolute; right: 5px; top: 22px; border: 5px solid transparent; border-bottom-color: #111; border-top: 0; }

.baidu { position: absolute; left: 851px; top: 511px; z-index: 2; }
.baidu svg { overflow: visible; }
.baidu-latin { font: bold 50px "Open Sans", sans-serif; }
.baidu-du { font: bold 34px "Open Sans", sans-serif; }
.baidu-cjk { font: 900 41px "Noto Sans CJK SC", sans-serif; }
.baidu-url { font: 28px "Noto Sans", sans-serif; fill: #e2e2e2; }

/* layout tabs and status bar */
.layout-tabs { display: flex; height: 27px; padding-left: 12px; background: #373737; color: #b5b5b5; }
.layout-tabs a { width: 73px; height: 23px; margin-right: -4px; text-align: center; line-height: 22px; background: linear-gradient(#474747, #5e5e5e); clip-path: path("M0 0H73C62 2 68 23 54 23H19C5 23 11 2 0 0Z"); }
.layout-tabs a.active { width: 64px; background: linear-gradient(#555, #8a8a8a); color: #fff; font-weight: bold; clip-path: path("M0 0H64C55 2 60 23 48 23H15C4 23 9 2 0 0Z"); }
.layout-tabs .add { margin: 0 0 0 6px; height: 23px; }
.status {
  display: flex;
  align-items: center;
  height: 32px;
  padding-left: 298px;
  background: linear-gradient(90deg, #373737 298px, #505050 0);
  color: #fff;
  overflow: hidden;
}
.status > * { flex: none; }
.coords { width: 228px; height: 32px; padding-right: 8px; border: 1px solid #808080; text-align: right; font: 14px/30px "Noto Sans CJK SC", sans-serif; }
.status button { width: 29px; height: 29px; display: flex; align-items: center; justify-content: center; }
.status button + button { margin-left: 1px; }
.status .model { width: 37px; height: 32px; margin-left: 0; border: 1px solid #808080; }
.status .caret { margin: 0 6px 0 5px; }
.status hr { width: 1px; height: 32px; margin: 0 1px; background: #808080; }
.status .on { border: 0; background: #5283bd; }
.status .scale { width: 74px; font: 14px "Noto Sans CJK SC", sans-serif; }
.status .scale + .caret { margin-left: 0; }

.site-badge {
  position: absolute;
  right: 0;
  bottom: 0;
  z-index: 3;
  width: 207px;
  height: 80px;
  padding: 4px 6px 0 14px;
  display: flex;
  flex-direction: column;
  align-items: center;
  background: linear-gradient(#93b8cc, #8fbce4 35%, #7ea3d8 65%, #4566a4);
}
.site-badge strong { font: 900 32px/38px "Noto Sans CJK SC", sans-serif; color: transparent; background: linear-gradient(90deg, #16a0ba, #2ea03c 35%, #2ea03c 70%, #16a0ba); background-clip: text; }
.site-badge span { margin-top: 8px; font: bold 18px/20px "Open Sans", sans-serif; color: #29a06a; }
```
